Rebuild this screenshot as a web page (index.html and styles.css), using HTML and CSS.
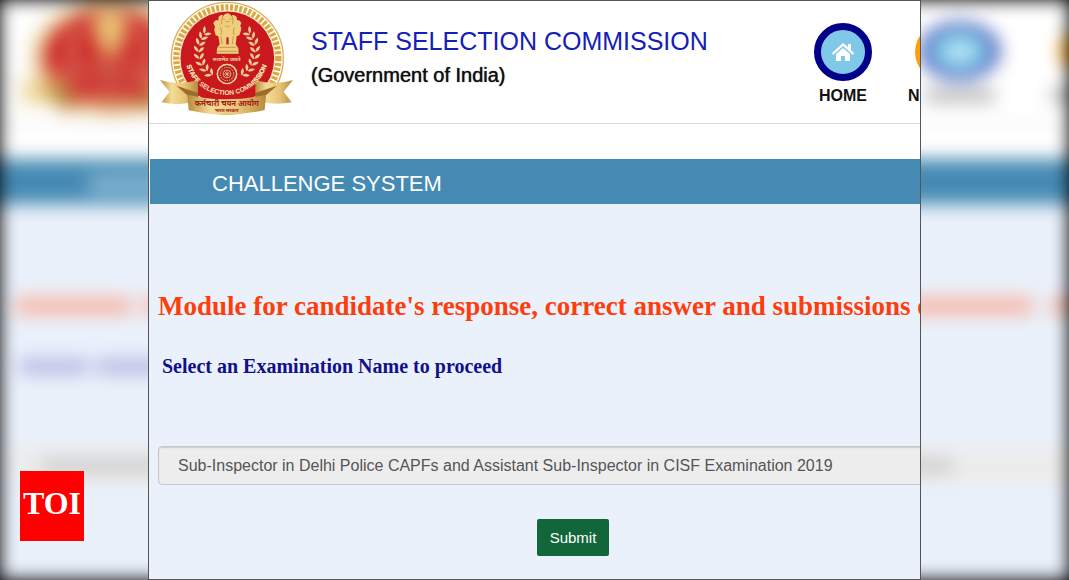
FILE: index.html
```html
<!DOCTYPE html>
<html lang="en">
<head>
<meta charset="utf-8">
<meta name="viewport" content="width=device-width, initial-scale=1">
<title>Staff Selection Commission - Challenge System</title>
<link rel="stylesheet" href="styles.css">
</head>
<body>
<div class="stage">
  <svg class="backdrop" viewBox="0 0 773 580" preserveAspectRatio="none" aria-hidden="true">
    <rect width="773" height="580" fill="#fff"/>
    <rect y="123" width="773" height="2" fill="#ddd"/>
    <use href="#emblem-art" transform="translate(2 0) scale(.3333)"/>
    <circle cx="694" cy="51" r="29" fill="#3a4cb5"/>
    <circle cx="694" cy="51" r="22" fill="#87ceeb"/>
    <path d="M688 51l6-6 6 6-1 6h-10z" fill="#fff"/>
    <rect x="669" y="90" width="50" height="11" fill="#aaa"/>
    <circle cx="795" cy="51" r="29" fill="#ff9d0a"/>
    <rect x="760" y="90" width="13" height="11" fill="#aaa"/>
    <rect y="159" width="773" height="421" fill="#eaf1fb"/>
    <rect y="159" width="773" height="45" fill="#458ab3"/>
    <rect x="64" y="176" width="234" height="16" fill="#8fbbd6"/>
    <g fill="#f7b8aa">
      <rect x="11" y="297" width="84" height="18"/><rect x="104" y="297" width="36" height="18"/>
      <rect x="146" y="297" width="601" height="18"/><rect x="760" y="297" width="13" height="18"/>
    </g>
    <g fill="#b5b8e3">
      <rect x="14" y="359" width="50" height="15"/><rect x="70" y="359" width="278" height="15"/>
    </g>
    <rect x="10" y="446" width="763" height="39" fill="#ececec"/>
    <rect x="30" y="459" width="659" height="14" fill="#ccc"/>
    <rect x="389" y="519" width="72" height="37" fill="#12673a"/>
  </svg>

  <main class="panel">
    <header class="masthead">
      <svg class="emblem" viewBox="30 0 402 345" role="img" aria-label="Staff Selection Commission emblem">
        <defs>
          <linearGradient id="gold" x1="0" x2="1">
            <stop offset="0" stop-color="#b98a3b"/><stop offset=".3" stop-color="#f3dc96"/>
            <stop offset=".65" stop-color="#e6c478"/><stop offset="1" stop-color="#b98a3b"/>
          </linearGradient>
          <path id="motto-arc" d="M104 156A126 126 0 0 0 356 156"/>
          <g id="leaf" fill="#e9cf96">
            <path d="M146 153q-15-4-14-19q13 4 14 19z"/>
            <path d="M146 155q2-16 16-16q-2 13-16 16z"/>
          </g>
          <g id="branch">
            <use href="#leaf" transform="rotate(39 231 150)"/>
            <use href="#leaf" transform="rotate(27 231 150)"/>
            <use href="#leaf" transform="rotate(14 231 150)"/>
            <use href="#leaf"/>
            <use href="#leaf" transform="rotate(-14 231 150)"/>
            <use href="#leaf" transform="rotate(-28 231 150)"/>
            <use href="#leaf" transform="rotate(-42 231 150)"/>
            <use href="#leaf" transform="rotate(-56 231 150)"/>
          </g>
        </defs>
        <g id="emblem-art">
          <circle cx="232" cy="172" r="168" fill="#fffaf0" stroke="#d6b263" stroke-width="4"/>
          <circle cx="232" cy="172" r="153" fill="none" stroke="#d9a944" stroke-width="19" stroke-dasharray="9 5"/>
          <circle cx="232" cy="172" r="142" fill="#c9191f" stroke="#f4e4b8" stroke-width="3"/>
          <use href="#branch"/>
          <use href="#branch" transform="translate(462 0) scale(-1 1)"/>
          <g fill="#efcf7f">
            <path d="M206 58q-4-12 8-16q5-1 6 3q4-8 12-8t12 8q3-5 8-2q12 4 8 15l-4 16 11 0q9 0 6 14l-5 15-8 3-3 24 8 12 1 16h-66l1-16 8-12-4-24-8-3-4-14q-1-13 8-14l8-1z"/>
            <path d="M190 67q6-14 18-8l2 20-13 3zM274 67q-6-14-18-8l-2 20 13 3z"/>
          </g>
          <g fill="none" stroke="#b57b2c" stroke-width="2">
            <path d="M219 53l5 3m15 0l6-3M226 62h12M219 45q-7 12-3 25M246 45q6 12 2 25M212 79q4 11 1 22M253 79q-5 11-1 22M226 74q6 8 13 0M206 139h52M202 151h60M213 106l3 23m34-23l-3 23"/>
          </g>
          <path d="M229 109h7v21h-7z" fill="#ba251e"/>
          <text class="emblem-caption" x="230" y="181" fill="#efd29a">सत्यमेव जयते</text>
          <circle cx="231" cy="219" r="29" fill="#bc1b20" stroke="#e9cf96" stroke-width="4"/>
          <circle cx="231" cy="219" r="20" fill="none" stroke="#e9cf96" stroke-width="3" stroke-dasharray="4 3"/>
          <circle cx="231" cy="219" r="12" fill="none" stroke="#e9cf96" stroke-width="2"/>
          <path d="M219 219h24M231 207v24M223 211l16 16M239 211l-16 16" stroke="#e9cf96" stroke-width="2"/>
          <text class="emblem-motto" fill="#f5e1b0"><textPath href="#motto-arc" startOffset="50%">STAFF SELECTION COMMISSION</textPath></text>
          <path d="M30 237q50 17 114 1v61q-55 18-109 5l23-32z" fill="url(#gold)"/>
          <path d="M429 237q-50 17-114 1v61q60 16 110 5l-24-32z" fill="url(#gold)"/>
          <path d="M79 254l35 30v18l31-10v-16zM381 254l-35 30v18l-31-10v-16z" fill="#9a6e29"/>
          <path d="M144 240h172v44h-172z" fill="#c9191f"/>
          <path d="M112 281q117 28 236 0l-4 46q-115 27-228 1z" fill="url(#gold)"/>
          <use href="#motto-arc" fill="none"/>
          <circle cx="231" cy="219" r="29" fill="none" stroke="#e9cf96" stroke-width="4"/>
          <text class="emblem-motto" fill="#f5e1b0"><textPath href="#motto-arc" startOffset="50%">STAFF SELECTION COMMISSION</textPath></text>
          <text class="emblem-name" x="230" y="315" fill="#a52218">कर्मचारी चयन आयोग</text>
          <text class="emblem-state" x="230" y="334" fill="#a52218">भारत सरकार</text>
        </g>
      </svg>
      <div class="identity">
        <h1 class="organisation">STAFF SELECTION COMMISSION</h1>
        <p class="government">(Government of India)</p>
      </div>
      <nav class="site-nav" aria-label="Main">
        <a class="nav-item" href="#home">
          <span class="nav-disc nav-disc-home">
            <svg class="nav-icon" viewBox="0 0 22 18" aria-hidden="true">
              <path d="M11 0L0 10l1 2L11 3l10 9 1-2-3-3V1h-3v3z" fill="#fff"/>
              <path d="M11 5L4 11v7h5v-5h4v5h5v-7z" fill="#fff"/>
            </svg>
          </span>
          <span>HOME</span>
        </a>
        <a class="nav-item" href="#n">
          <span class="nav-disc nav-disc-notice"></span>
          <span class="nav-start">N</span>
        </a>
      </nav>
    </header>

    <h2 class="section-bar">CHALLENGE SYSTEM</h2>

    <form class="challenge">
      <p class="module">Module for candidate's response, correct answer and submissions o</p>
      <label class="prompt" for="exam">Select an Examination Name to proceed</label>
      <select class="exam" id="exam">
        <option>Sub-Inspector in Delhi Police CAPFs and Assistant Sub-Inspector in CISF Examination 2019</option>
      </select>
      <button class="submit" type="button">Submit</button>
    </form>
  </main>

  <div class="toi">TOI</div>
</div>
</body>
</html>
```
FILE: styles.css
```css
* {
  box-sizing: border-box;
}

body {
  margin: 0;
  background: #000;
  font-family: "Liberation Sans", Arial, sans-serif;
}

.stage {
  position: relative;
  display: flex;
  min-height: 100vh;
  padding: 0 148px;
  overflow: hidden;
}

.backdrop {
  position: absolute;
  inset: 0;
  width: 100%;
  height: 100%;
  filter: blur(9px);
}

.panel {
  position: relative;
  flex: 1;
  min-width: 0;
  padding: 0 0 0 1px;
  overflow: hidden;
  border: 1px solid #555;
  background: #eaf1fb;
}

.masthead {
  display: flex;
  align-items: flex-start;
  height: 124px;
  margin-left: -1px;
  padding-left: 11px;
  border-bottom: 2px solid #d9d9d9;
  background: #fff;
}

.emblem {
  flex: none;
  width: 134px;
  height: 115px;
}

.emblem-motto {
  font: bold 20px "Liberation Sans", Arial, sans-serif;
  text-anchor: middle;
}

.emblem-caption,
.emblem-name,
.emblem-state {
  font-family: "Noto Sans", sans-serif;
  font-weight: bold;
  text-anchor: middle;
}

.emblem-caption {
  font-size: 16px;
}

.emblem-name {
  font-size: 23px;
}

.emblem-state {
  font-size: 14px;
}

.identity {
  flex: 1;
  padding: 23px 0 0 17px;
  white-space: nowrap;
}

.organisation {
  margin: 0;
  color: #1420b8;
  font-size: 25px;
  font-weight: normal;
  line-height: 34px;
}

.government {
  margin: 0;
  color: #111;
  font-size: 20px;
  line-height: 34px;
  text-shadow: 0 0 1px #111;
}

.site-nav {
  display: flex;
  flex: none;
  gap: 43px;
  margin-right: -53px;
  padding-top: 22px;
}

.nav-item {
  display: flex;
  flex-direction: column;
  align-items: center;
  gap: 5px;
  width: 58px;
  color: #111;
  font-size: 16px;
  font-weight: bold;
  line-height: 20px;
  text-decoration: none;
}

.nav-disc {
  display: grid;
  place-items: center;
  width: 58px;
  height: 58px;
  border-radius: 50%;
}

.nav-disc-home {
  border: 7px solid #00008b;
  background: #7fc8e8;
}

.nav-disc-notice {
  background: #ff9d0a;
}

.nav-icon {
  width: 22px;
  height: 18px;
}

.nav-start {
  width: 72px;
}

.section-bar {
  margin: 34px 0 0;
  padding: 5px 0 0 62px;
  background: #458ab3;
  box-shadow: 0 -34px 0 1px #fff;
  color: #fff;
  font-size: 22px;
  font-weight: normal;
  line-height: 40px;
}

.challenge {
  display: flex;
  flex-direction: column;
  align-items: flex-start;
  width: 838px;
  padding: 84px 0 23px 8px;
}

.module {
  margin: 0 0 30px;
  color: #fc3e0c;
  font: bold 27px/36px "Liberation Serif", "Times New Roman", serif;
  white-space: nowrap;
}

.prompt {
  margin: 0 0 68px 4px;
  color: #10108a;
  font: bold 20px/24px "Liberation Serif", "Times New Roman", serif;
}

.exam {
  width: 100%;
  height: 39px;
  margin-bottom: 34px;
  padding: 0 19px;
  appearance: none;
  border: 1px solid #c8c8c8;
  border-radius: 4px;
  background: #ededed;
  box-shadow: inset 0 1px 1px #ccc;
  color: #555;
  font: 16px "Liberation Sans", Arial, sans-serif;
}

.submit {
  align-self: center;
  width: 72px;
  height: 37px;
  padding: 0;
  border: 0;
  border-radius: 2px;
  background: #12673a;
  color: #fff;
  font: 15px "Liberation Sans", Arial, sans-serif;
}

.toi {
  position: absolute;
  bottom: 39px;
  left: 20px;
  width: 64px;
  height: 70px;
  background: #f00;
  color: #fff;
  font: bold 32px/64px "Liberation Serif", "Times New Roman", serif;
  text-align: center;
}
```
